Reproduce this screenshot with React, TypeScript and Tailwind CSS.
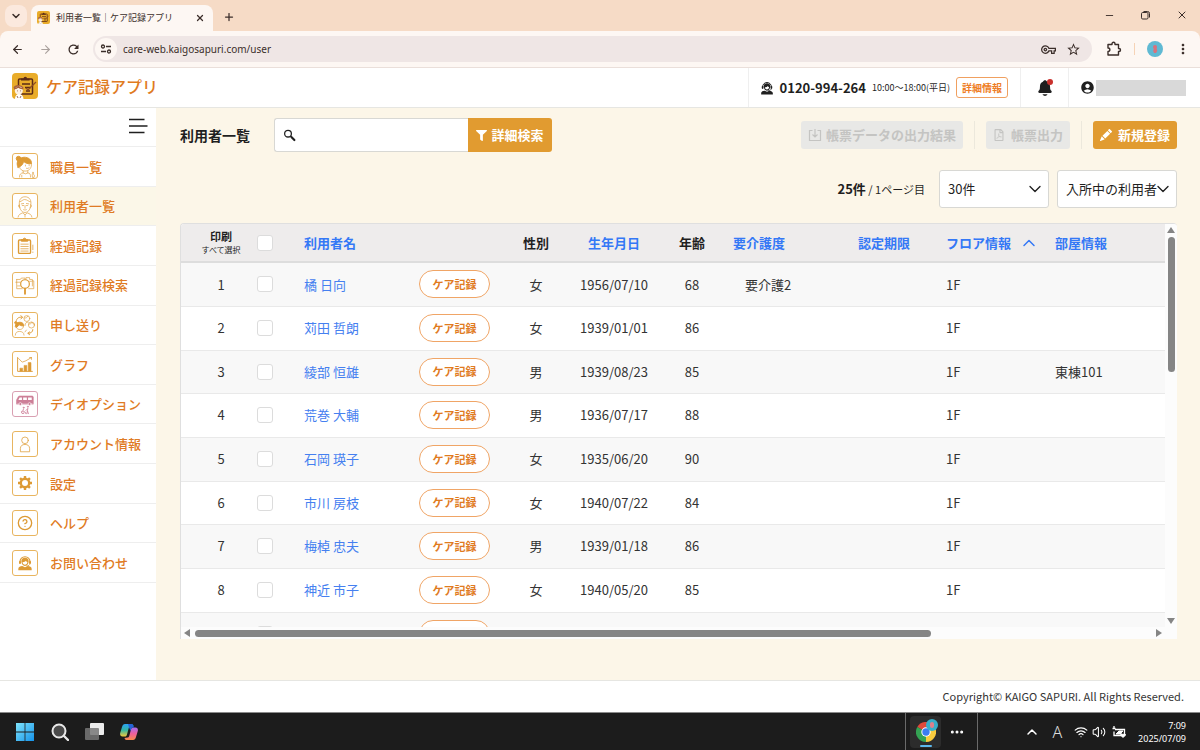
import { FaFilter, FaRegFilePdf } from "react-icons/fa"
import { BsPencilFill } from "react-icons/bs"
import { IoNotifications } from "react-icons/io5"
import { MdAccountCircle, MdOutlineVpnKey, MdStarOutline, MdMoreVert, MdRefresh } from "react-icons/md"
import {
  ArrowLeft,
  ArrowRight,
  ChevronDown,
  ChevronUp,
  CircleHelp,
  Minus,
  MoreHorizontal,
  Plus,
  Volume2,
  Wifi,
  X,
} from "lucide-react"
import type { ReactNode } from "react"

type User = {
  name: string
  sex: string
  birth: string
  age: number
  level?: string
  floor: string
  room?: string
}

const users: User[] = [
  { name: "橘 日向", sex: "女", birth: "1956/07/10", age: 68, level: "要介護2", floor: "1F" },
  { name: "苅田 哲朗", sex: "女", birth: "1939/01/01", age: 86, floor: "1F" },
  { name: "綾部 恒雄", sex: "男", birth: "1939/08/23", age: 85, floor: "1F", room: "東棟101" },
  { name: "荒巻 大輔", sex: "男", birth: "1936/07/17", age: 88, floor: "1F" },
  { name: "石岡 瑛子", sex: "女", birth: "1935/06/20", age: 90, floor: "1F" },
  { name: "市川 房枝", sex: "女", birth: "1940/07/22", age: 84, floor: "1F" },
  { name: "梅棹 忠夫", sex: "男", birth: "1939/01/18", age: 86, floor: "1F" },
  { name: "神近 市子", sex: "女", birth: "1940/05/20", age: 85, floor: "1F" },
  { name: "小林 一", sex: "女", birth: "1938/03/12", age: 87, level: "要介護3", floor: "1F" },
]

function Operator({ className }: { className?: string }) {
  return (
    <svg viewBox="0 0 24 24" className={className} fill="currentColor" aria-hidden="true">
      <path d="M4.500 10a7.500 7.500 0 0 1 15 0" fill="none" stroke="currentColor" strokeWidth="1.600" />
      <path d="M12 4a5.500 5.500 0 0 0-5.500 5.500c0 4 2.300 7 5.500 7s5.500-3 5.500-7A5.500 5.500 0 0 0 12 4zm-3.700 6.800c2.500 0 4.200-.8 5.200-2.200.5 1.200 1 1.800 2.100 2.200-.2 2.300-1.700 3.700-3.600 3.700s-3.500-1.400-3.700-3.700z" />
      <rect x="3" y="8.500" width="3" height="5" rx="1.400" />
      <rect x="18" y="8.500" width="3" height="5" rx="1.400" />
      <path d="M19.300 13c0 2-1.800 3.500-5.300 3.500" fill="none" stroke="currentColor" strokeWidth="1.200" />
      <path d="M2 23v-2.500c0-2.500 3-3.700 6-4l4 2 4-2c3 .3 6 1.500 6 4V23z" />
    </svg>
  )
}

function Gear({ className }: { className?: string }) {
  return (
    <svg viewBox="0 0 16 16" className={className} fill="none" stroke="currentColor" aria-hidden="true">
      <circle cx="8" cy="8" r="4.200" strokeWidth="2.400" />
      <path
        d="M8 1v2.500M8 12.500V15M1 8h2.500M12.500 8H15M3.050 3.050l1.800 1.800M11.150 11.150l1.800 1.800M3.050 12.950l1.800-1.800M11.150 4.850l1.800-1.800"
        strokeWidth="2.400"
      />
    </svg>
  )
}

function AppLogo({ className }: { className?: string }) {
  return (
    <svg viewBox="0 0 26 26" className={className} aria-hidden="true">
      <rect width="26" height="26" rx="4" fill="#e9ac2a" />
      <rect x="6.500" y="6" width="14" height="15" rx="1" fill="none" stroke="#5b2a16" strokeWidth="1.500" />
      <path d="M9 7.500V5.500h2.500a1.800 1.800 0 0 1 3.600 0h2.500v2z" fill="#5b2a16" />
      <path d="M10 11h8M13 14.500h6M14 18h4" stroke="#5b2a16" strokeWidth="1.300" />
      <path d="m14 15 2 2 8-8" stroke="#8c4a24" strokeWidth="1.200" fill="none" />
      <path d="M1.500 14.500c1-3.500 8-3.500 10 0l-1.500 2H3z" fill="#a9623b" />
      <circle cx="6.800" cy="17.500" r="4" fill="#fdf1e4" />
      <path d="M3 26c0-3 1.500-5 4-5s4.500 2 4.500 5z" fill="#fff" />
      <path d="M2 15.800c2.500-.2 3.500-1 4.300-2 1 1.300 2.500 1.800 5 2" stroke="#a9623b" strokeWidth="1.400" fill="none" />
      <path d="M5.500 17.500v.8M8.500 17.500v.8M5 23l1 2M9 23l-1 2" stroke="#7b4b38" strokeWidth=".8" />
    </svg>
  )
}

function Art({ children }: { children: ReactNode }) {
  return (
    <svg
      viewBox="0 0 26 26"
      className="size-full"
      fill="none"
      stroke="currentColor"
      strokeWidth="1"
      strokeLinecap="round"
      strokeLinejoin="round"
      aria-hidden="true"
    >
      {children}
    </svg>
  )
}

const menu = [
  {
    label: "職員一覧",
    icon: (
      <Art>
        <circle cx="6" cy="5" r="2.500" fill="currentColor" />
        <path d="M5.500 14.500C2.500 9 6 4 12 3.500c5 0 8.500 3 8 7-4 .3-6.500-.5-8.500-2.500-.5 3-2.500 5.500-6 6.500z" fill="currentColor" />
        <g strokeWidth=".7">
          <path d="M7 14c.5 2.500 3 5 7 4.500 4-.5 6.500-4 6-8" />
          <path d="M13.500 12v1M17.500 11.500v1M14.500 15.500c1.200.5 2 .2 3-.8M11 18.500v2M16 18.500v2M7 25c0-3 1.500-4.500 4-4.500l2.500 1 2.500-1c2.500 0 3 1.500 3 4.500M9.500 25v-2" />
          <path d="M21 25c-.5-2 0-3 .5-5.500.8 0 .8 1 .7 2.500 1 .5 1.300 1.500.8 3z" />
        </g>
      </Art>
    ),
  },
  {
    label: "利用者一覧",
    active: true,
    icon: (
      <Art>
        <g strokeWidth=".7">
          <path d="M7 13C6 7 8 3 13 3s7.500 4 6 10c-.5 4.500-3 7-6 7s-5.500-2.500-6-7z" />
          <path d="M7.500 8.500c2-.5 3-2.500 5-2.500 3 0 4 2 6.200 2.500M6.800 11.500c-1.500 0-1 3.500.7 3.500M19.200 11.500c1.500 0 1 3.500-.7 3.500" />
          <path d="M9 10.700l2.500-.4M14.500 10.300l2.500.4M10 12.500h1.500M14.500 12.500H16M13 12.500v3M11.500 17c1 .5 2 .5 3 0" />
          <path d="M5.500 25c.5-3 2.500-3.500 5-4.500l2.500 2 2.500-2c2.500 1 4.500 1.500 5 4.500M13 22.500V25" />
        </g>
      </Art>
    ),
  },
  {
    label: "経過記録",
    icon: (
      <Art>
        <rect x="6" y="6.500" width="13" height="14.500" rx="1" strokeWidth="1.500" />
        <path d="M9 7.500V6h2a1.500 1.500 0 0 1 3 0h2v1.500z" fill="currentColor" />
        <path d="M8.500 11h8M8.500 13.500h8M8.500 16h8M8.500 18.500h8M21.500 12v5M21.500 19.500v.5" strokeWidth=".8" />
      </Art>
    ),
  },
  {
    label: "経過記録検索",
    icon: (
      <Art>
        <path d="M4 7h4l1-1.500h4V7M14 7V5h4v2h3v7M4 7v10h6M3 10h5M21 8.500h1.500V17H17M5 14h3M18 9h2" strokeWidth=".7" />
        <circle cx="13" cy="12" r="4.700" strokeWidth="1.300" fill="#fff" />
        <path d="M13 17v5.500" strokeWidth="2" />
      </Art>
    ),
  },
  {
    label: "申し送り",
    icon: (
      <Art>
        <path d="M3.500 9c0-3 3-5 6-4.500M8.500 3l2 1.500-2 2M21.500 18c0 2.500-2 4-5 4M18 20.500L16 22l2 1.500" />
        <path d="M2.500 14.500c0-3 2-4.500 5-4.500s4.500 2 4 4c-2.500 0-4-.5-5-1.500-.5 1.500-1.500 2.500-3 3z" fill="currentColor" />
        <circle cx="3" cy="10.500" r="1.200" fill="currentColor" />
        <g strokeWidth=".7">
          <path d="M3.500 15.500c1.500 4 8 3 8-1.500M2.500 24c0-3 2-4 4.500-4s5 1 5 4M13 20.500l1.500-2" />
          <circle cx="15" cy="6" r="3.200" />
          <path d="M12.500 5.500c2 0 3-.7 3.500-2" />
          <circle cx="20" cy="13" r="3.300" />
          <path d="M17 12c2 0 3-.5 3.500-2 .7 1.500 1.500 2 2.500 2M13 13.500c0-3 2-4 3.500-3.500" />
        </g>
      </Art>
    ),
  },
  {
    label: "グラフ",
    icon: (
      <Art>
        <path d="M5 6v15h16" />
        <path d="M7.500 20.500v-3h3v3zM12 20.500v-6h3v6zM16.500 20.500v-9h3v9z" fill="currentColor" strokeWidth=".6" />
        <path d="M6 7l4 4 4-1.500L20 6M18 6h2v2" strokeWidth=".8" />
      </Art>
    ),
  },
  {
    label: "デイオプション",
    pink: true,
    icon: (
      <Art>
        <path d="M3.800 12.800v-4l2-3.800c.3-.5.700-.7 1.300-.7h13.400c1 0 1.500.5 1.500 1.500v7z" fill="currentColor" strokeWidth=".6" />
        <path d="M5.800 8.800l1.400-2.800h2.500v2.800zM11 6h4v2.800h-4zM16.300 6h4v2.800h-4z" fill="#fff" stroke="none" />
        <circle cx="8" cy="13" r="1.600" fill="currentColor" stroke="#fff" strokeWidth=".6" />
        <circle cx="18" cy="13" r="1.600" fill="currentColor" stroke="#fff" strokeWidth=".6" />
        <g strokeWidth=".9">
          <circle cx="11.500" cy="17" r=".5" />
          <circle cx="16" cy="16" r=".5" />
          <path d="M11.300 18.500l-.8 3h2.500l1 2M9.700 20.500a1.700 1.700 0 1 0 2.300 2.500M16 17.800l-.3 2.700 1 3M15.500 18.500l-1.500 1.500M15.500 21l-.5 2.500" />
        </g>
      </Art>
    ),
  },
  {
    label: "アカウント情報",
    icon: (
      <Art>
        <circle cx="13" cy="9" r="3.600" strokeWidth=".8" />
        <path d="M8 21v-3c0-3 2-4.500 5-4.500s5 1.500 5 4.500v3z" strokeWidth=".8" />
      </Art>
    ),
  },
  { label: "設定", icon: <Gear className="size-4" /> },
  { label: "ヘルプ", icon: <CircleHelp className="size-4" strokeWidth={2} /> },
  { label: "お問い合わせ", icon: <Operator className="size-4" /> },
]

function BrowserBar() {
  return (
    <div className="shrink-0 bg-[#f6dbc6] text-[#3b2e2a]">
      <div className="flex h-[31px] items-end">
        <button aria-label="タブを検索" className="mb-1 ml-[5px] grid size-[22px] place-items-center rounded-lg bg-[#fbe9de]">
          <ChevronDown className="size-3" strokeWidth={3} />
        </button>
        <div className="ml-1 flex h-[26px] w-[182px] items-center rounded-t-lg bg-[#fdf7f3] px-1.5 pb-px">
          <AppLogo className="size-[13px]" />
          <span className="ml-1.5 flex-1 text-[9px] whitespace-nowrap">利用者一覧｜ケア記録アプリ</span>
          <button aria-label="タブを閉じる" className="mr-0.5">
            <X className="size-2.5" strokeWidth={3} />
          </button>
        </div>
        <button aria-label="新しいタブ" className="mb-2 ml-2.5">
          <Plus className="size-3" strokeWidth={2.500} />
        </button>
        <div className="mb-2.5 ml-auto flex gap-[25px] pr-3">
          <button aria-label="最小化"><Minus className="size-[11px]" strokeWidth={2} /></button>
          <button aria-label="元に戻す">
            <svg viewBox="0 0 11 11" className="size-[11px]" fill="none" stroke="currentColor">
              <rect x="1.500" y="2.500" width="6.500" height="6.500" rx="1.200" />
              <path d="M3.500 1.500h4a2 2 0 0 1 2 2v4" />
            </svg>
          </button>
          <button aria-label="閉じる"><X className="size-3" strokeWidth={2} /></button>
        </div>
      </div>
      <div className="flex h-[37px] items-center rounded-tl-lg rounded-tr-lg border-b border-[#eadfda] bg-[#fdf7f3] pr-[13px] pl-[11px]">
        <button aria-label="戻る"><ArrowLeft className="size-[13px]" strokeWidth={2.200} /></button>
        <button aria-label="進む" className="ml-[15px] text-[#aaa19d]"><ArrowRight className="size-[13px]" strokeWidth={2} /></button>
        <button aria-label="再読み込み" className="ml-[14px]"><MdRefresh className="size-[15px]" /></button>
        <div className="ml-3 flex h-[26px] flex-1 items-center rounded-full bg-[#efe6e5] pr-[11px] pl-0.5">
          <span className="grid size-[22px] place-items-center rounded-full bg-[#fdf7f3]">
            <svg viewBox="0 0 12 12" className="size-3" fill="none" stroke="currentColor" strokeWidth="1.300">
              <circle cx="3" cy="3.500" r="1.500" />
              <path d="M6 3.500h5M1 8.500h5" />
              <circle cx="9" cy="8.500" r="1.500" />
            </svg>
          </span>
          <input
            aria-label="アドレス"
            defaultValue="care-web.kaigosapuri.com/user"
            className="ml-1.5 min-w-0 flex-1 bg-transparent font-['Noto_Sans',sans-serif] text-[10px] outline-none"
          />
          <MdOutlineVpnKey className="size-[15px]" />
          <MdStarOutline className="ml-2.5 size-[15px]" />
        </div>
        <svg viewBox="0 0 16 16" className="ml-3.5 size-4" fill="none" stroke="currentColor" strokeWidth="1.400" strokeLinejoin="round">
          <path d="M2 3.500h4v-.8a1.500 1.500 0 0 1 3 0v.8h3.500v4h.5a1.500 1.500 0 0 1 0 3h-.5V14H2v-3.500c2.500 0 2.500-3.500 0-3.500z" />
        </svg>
        <span className="ml-3 h-3 w-px bg-[#f6d3b6]" />
        <span className="ml-3 grid size-4 place-items-center rounded-full bg-[#5fb9d3]">
          <svg viewBox="0 0 8 10" className="h-2.5 w-2" fill="#d9717c">
            <circle cx="4" cy="3" r="2" />
            <path d="M3 4h2.500l.8 3L5 9H3l-.8-2z" />
          </svg>
        </span>
        <MdMoreVert className="-mr-1 ml-3 size-4" />
      </div>
    </div>
  )
}

function AppHeader() {
  return (
    <header className="flex h-10 shrink-0 items-stretch border-b border-[#e6e6e2] bg-white">
      <a href="#" className="flex items-center gap-2 pb-1 pl-3 text-[16px] font-medium text-[#e07b1f]">
        <AppLogo className="size-[26px]" />
        ケア記録アプリ
      </a>
      <div className="ml-auto flex items-center border-l border-[#efefef] pr-3 pl-[11px]">
        <Operator className="size-3.5" />
        <span className="ml-1.5 text-[13px] font-bold">0120-994-264</span>
        <span className="ml-1.5 text-[9px]">10:00～18:00(平日)</span>
        <button className="ml-1.5 h-[21px] rounded-[3px] border border-[#f0a060] px-[5px] text-[10px] leading-none font-bold text-[#ee7d26]">
          詳細情報
        </button>
      </div>
      <button aria-label="通知" className="relative grid w-12 place-items-center border-l border-[#efefef]">
        <IoNotifications className="size-[18px]" />
        <span className="absolute top-[11px] left-[26px] size-1.5 rounded-full bg-[#c8302c]" />
      </button>
      <div className="flex items-center border-l border-[#efefef] pr-3.5 pl-[11px]">
        <MdAccountCircle className="size-[15px]" />
        <span className="ml-px h-4 w-[90px] bg-[#d9d9d9]" />
      </div>
    </header>
  )
}

function Sidebar() {
  return (
    <aside className="w-[156px] shrink-0 bg-white">
      <div className="flex h-[38px] items-start justify-end pt-2 pr-2">
        <button aria-label="メニュー">
          <svg viewBox="0 0 20 20" className="size-5" stroke="currentColor" strokeWidth="1.300">
            <path d="M1 3.500h15.500M1 10h18.500M1 16.500h15.500" />
          </svg>
        </button>
      </div>
      <nav className="grid h-[437px] auto-rows-fr border-t border-[#eeeeee]">
        {menu.map((item) => (
          <a
            key={item.label}
            href="#"
            className={`flex items-center gap-3 border-b border-[#eeeeee] pl-3 text-[13px] font-medium text-[#df7b24] ${item.active ? "bg-[#fbf7e8]" : ""}`}
          >
            <span
              className={`grid size-[26px] place-items-center rounded-[3px] border bg-white ${item.pink ? "border-[#d9a0b2] text-[#cd7f98]" : "border-[#e8b560] text-[#dd9a34]"}`}
            >
              {item.icon}
            </span>
            {item.label}
          </a>
        ))}
      </nav>
    </aside>
  )
}

function Toolbar() {
  return (
    <>
      <div className="flex h-[34px] items-center">
        <h1 className="text-[14px] font-bold">利用者一覧</h1>
        <div className="ml-6 flex h-full">
          <label className="flex w-[194px] items-center rounded-l-[3px] border border-r-0 border-[#d8d8d4] bg-white pl-2">
            <svg viewBox="0 0 14 14" className="size-3.5" fill="none" stroke="currentColor">
              <circle cx="5.500" cy="5.500" r="3.700" strokeWidth="1.400" />
              <path d="M8.500 8.500l1 1" strokeWidth="1.400" />
              <path d="M9.500 9.500l3 3" strokeWidth="2.400" strokeLinecap="round" />
            </svg>
            <input type="text" aria-label="利用者を検索" className="ml-1 w-full min-w-0 outline-none" />
          </label>
          <button className="flex w-[84px] items-center justify-center gap-1 rounded-r-[3px] bg-[#e19b30] text-[13px] font-bold text-white">
            <FaFilter className="size-[11px]" />
            詳細検索
          </button>
        </div>
        <div className="ml-auto flex h-7 items-center text-[13px] font-bold">
          <button disabled className="flex h-full items-center gap-1 rounded-[3px] bg-[#e8e8e6] px-[7px] text-[#c4c4c2]">
            <svg viewBox="0 0 14 14" className="size-3.5" fill="none" stroke="currentColor" strokeWidth="1.200">
              <path d="M4.500 2.500h-3v10h11v-10h-3M7 1v8M4.500 6.500L7 9l2.500-2.500" />
            </svg>
            帳票データの出力結果
          </button>
          <span className="mx-[11px] h-full w-px bg-[#ece8dc]" />
          <button disabled className="flex h-full items-center gap-1.5 rounded-[3px] bg-[#e8e8e6] px-[7px] text-[#c4c4c2]">
            <FaRegFilePdf className="size-3" />
            帳票出力
          </button>
          <span className="mx-[11px] h-full w-px bg-[#ece8dc]" />
          <button className="flex h-full items-center gap-1.5 rounded-[3px] bg-[#e19b30] px-[7px] text-white">
            <BsPencilFill className="size-3" />
            新規登録
          </button>
        </div>
      </div>
      <div className="mt-[18px] flex h-[38px] items-center justify-end">
        <p className="mr-3.5 text-[11px]">
          <b className="text-[13px]">25件</b> / 1ページ目
        </p>
        <div className="relative mr-2 h-full w-[110px]">
          <select aria-label="表示件数" className="size-full appearance-none rounded-[3px] border border-[#d8d8d4] bg-white pl-2 text-[13px]">
            <option>30件</option>
          </select>
          <ChevronDown className="pointer-events-none absolute inset-y-0 right-1 my-auto size-5" strokeWidth={1.600} />
        </div>
        <div className="relative h-full w-[120px]">
          <select aria-label="利用者の状態" className="size-full appearance-none rounded-[3px] border border-[#d8d8d4] bg-white pl-2 text-[13px]">
            <option>入所中の利用者</option>
          </select>
          <ChevronDown className="pointer-events-none absolute inset-y-0 right-1 my-auto size-5" strokeWidth={1.600} />
        </div>
      </div>
    </>
  )
}

const checkbox = "block mx-auto size-4 appearance-none rounded-[3px] border border-[#dcdcdc] bg-white checked:bg-[#3478f6]"

function UserTable() {
  return (
    <div className="mt-[15px] flex min-h-0 flex-1 flex-col overflow-hidden rounded-t-[4px] border-t border-l border-[#dfdfdf] bg-white">
      <div className="flex min-h-0 flex-1">
        <div className="min-w-0 flex-1 overflow-hidden">
          <table className="w-full table-fixed text-[13px] text-[#333]">
            <colgroup>
              <col className="w-[70px]" />
              <col className="w-7" />
              <col className="w-[130px]" />
              <col className="w-[91px]" />
              <col className="w-[72px]" />
              <col className="w-[84px]" />
              <col className="w-[72px]" />
              <col className="w-20" />
              <col className="w-[129px]" />
              <col className="w-[108px]" />
              <col />
            </colgroup>
            <thead>
              <tr className="h-[38px] border-b-2 border-[#dddddd] bg-[#eeecec] text-[#1f1f1f]">
                <th className="pl-2.5 text-[11px] leading-[14px]">
                  印刷
                  <span className="block text-[8px] font-normal whitespace-nowrap">すべて選択</span>
                </th>
                <th><input type="checkbox" aria-label="すべて選択" className={checkbox} /></th>
                <th className="pl-[25px] text-left text-[#3478f6]">利用者名</th>
                <th />
                <th>性別</th>
                <th className="text-[#3478f6]">生年月日</th>
                <th>年齢</th>
                <th className="pl-[5px] text-left text-[#3478f6]">要介護度</th>
                <th className="pl-[50px] text-left text-[#3478f6]">認定期限</th>
                <th className="pl-[9px] text-left text-[#3478f6]">
                  <span className="flex items-center gap-2 whitespace-nowrap">
                    フロア情報
                    <ChevronUp className="size-5" strokeWidth={1.800} />
                  </span>
                </th>
                <th className="pl-2.5 text-left text-[#3478f6]">部屋情報</th>
              </tr>
            </thead>
            <tbody>
              {users.map((user, index) => (
                <tr key={user.name} className="h-11 border-b border-[#e9e9e9] text-center odd:bg-[#f8f8f8] nth-[3n]:h-[43px]">
                  <td className="pl-2.5">{index + 1}</td>
                  <td><input type="checkbox" aria-label={user.name} className={checkbox} /></td>
                  <td className="pl-[25px] text-left">
                    <a href="#" className="text-[#4580f0]">{user.name}</a>
                  </td>
                  <td>
                    <button className="h-7 w-[71px] rounded-full border border-[#f0a566] bg-white text-[11px] font-bold text-[#e07b1f]">
                      ケア記録
                    </button>
                  </td>
                  <td>{user.sex}</td>
                  <td>{user.birth}</td>
                  <td>{user.age}</td>
                  <td>{user.level}</td>
                  <td />
                  <td className="pl-[9px] text-left">{user.floor}</td>
                  <td className="pl-2.5 text-left">{user.room}</td>
                </tr>
              ))}
            </tbody>
          </table>
        </div>
        <div className="flex w-3 shrink-0 flex-col items-center bg-[#fcfcfc] pt-[3px]">
          <svg viewBox="0 0 8 6" className="h-1.5 w-2" fill="#858585"><path d="M4 0l4 6H0z" /></svg>
          <div className="mt-1 h-[135px] w-[7px] rounded-full bg-[#858585]" />
          <svg viewBox="0 0 8 6" className="mt-auto mb-[3px] h-1.5 w-2" fill="#858585"><path d="M4 6l4-6H0z" /></svg>
        </div>
      </div>
      <div className="flex h-3 shrink-0 items-center bg-[#fcfcfc] pr-[15px] pl-[3px]">
        <svg viewBox="0 0 6 8" className="h-2 w-1.5" fill="#858585"><path d="M0 4l6-4v8z" /></svg>
        <div className="mx-[5px] flex-1">
          <div className="h-[7px] w-[77%] rounded-full bg-[#858585]" />
        </div>
        <svg viewBox="0 0 6 8" className="h-2 w-1.5" fill="#858585"><path d="M6 4L0 0v8z" /></svg>
      </div>
    </div>
  )
}

function Taskbar() {
  return (
    <div className="flex h-[38px] shrink-0 items-center border-t border-[#8a8a8a] bg-[#1c1c1c] pr-3.5 pl-4 font-['Noto_Sans',sans-serif] text-white">
      <button aria-label="スタート">
        <svg viewBox="0 0 18 18" className="size-[18px]">
          <defs>
            <linearGradient id="win" x1="0" y1="0" x2="1" y2="1">
              <stop offset="0" stopColor="#7fe3fb" />
              <stop offset="1" stopColor="#1593ea" />
            </linearGradient>
          </defs>
          <path d="M0 0h8.600v8.600H0zM9.400 0H18v8.600H9.400zM0 9.400h8.600V18H0zM9.400 9.400H18V18H9.400z" fill="url(#win)" />
        </svg>
      </button>
      <button aria-label="検索" className="ml-[17px]">
        <svg viewBox="0 0 18 18" className="size-[18px]" fill="#4a4a4a" stroke="#e8e8e8">
          <circle cx="8" cy="8" r="6.500" strokeWidth="2" />
          <path d="M13 13l4 4" strokeWidth="2.400" strokeLinecap="round" />
        </svg>
      </button>
      <button aria-label="タスクビュー" className="ml-4">
        <svg viewBox="0 0 19 18" className="h-[18px] w-[19px]">
          <rect x="5" y="0" width="14" height="12" rx="1" fill="#ececec" />
          <rect x="0" y="5" width="14" height="12" rx="1" fill="#777" fillOpacity=".85" />
        </svg>
      </button>
      <button aria-label="Copilot" className="ml-4">
        <svg viewBox="0 0 18 18" className="size-[18px]">
          <defs>
            <linearGradient id="cpa" x1="0" y1="0" x2="0" y2="1">
              <stop offset="0" stopColor="#2aa4f4" />
              <stop offset=".5" stopColor="#36b6a0" />
              <stop offset="1" stopColor="#f5c83a" />
            </linearGradient>
            <linearGradient id="cpb" x1="0" y1="0" x2="0" y2="1">
              <stop offset="0" stopColor="#a56ef0" />
              <stop offset=".5" stopColor="#ee5f9b" />
              <stop offset="1" stopColor="#f78a4a" />
            </linearGradient>
          </defs>
          <path d="M5 1h6.500c1.200 0 1.700 1 2 2l-3 .5c-1 0-1.500.7-1.800 1.800L7 11.500C6.600 13 6 13.500 5 13.500H2.500C.5 13.500-.2 12 .2 10L2 4c.5-2 1.500-3 3-3z" fill="url(#cpa)" />
          <path d="M13 17H6.500c-1.200 0-1.700-1-2-2l3-.5c1 0 1.500-.7 1.800-1.800L11 6.500C11.400 5 12 4.500 13 4.500h2.500c2 0 2.700 1.500 2.300 3.500L16 14c-.5 2-1.500 3-3 3z" fill="url(#cpb)" />
          <path d="M11.500 1c1.200 0 1.700 1 2 2l.5 1.500h-1c-1 0-1.600.5-2 2l-.5 1.500L9 4.500 8 1z" fill="#2563d8" />
        </svg>
      </button>
      <div className="ml-auto flex h-full items-center border-x border-[#6a6a6a] px-1">
        <button aria-label="Chrome" className="relative grid h-8 w-[31px] place-items-center rounded bg-[#2c2c2c]">
          <svg viewBox="0 0 20 20" className="size-5">
            <path d="M10 10L1.300 5A10 10 0 0 1 18.700 5z" fill="#e04a3a" />
            <path d="M10 10L18.700 5A10 10 0 0 1 10 20z" fill="#f8cb3e" />
            <path d="M10 10v10A10 10 0 0 1 1.300 5z" fill="#34a353" />
            <circle cx="10" cy="10" r="4.700" fill="#fff" />
            <circle cx="10" cy="10" r="3.700" fill="#3b7df0" />
          </svg>
          <span className="absolute top-[3px] right-[3px] grid size-3 place-items-center rounded-full bg-[#38aec8]">
            <span className="h-1.5 w-1 rounded-full bg-[#e0808a]" />
          </span>
          <span className="absolute bottom-px h-0.5 w-3 rounded-full bg-[#5cb8ee]" />
        </button>
        <button aria-label="その他のアプリ" className="mx-2"><MoreHorizontal className="size-4" strokeWidth={2.500} /></button>
      </div>
      <div className="ml-[46px] flex items-center">
        <ChevronUp className="size-4" strokeWidth={2.200} />
        <span className="ml-3 text-[16px] font-light text-[#dcdcdc]">A</span>
        <Wifi className="ml-3 size-3.5" strokeWidth={2} />
        <Volume2 className="ml-1 size-3.5" strokeWidth={1.800} />
        <svg viewBox="0 0 14 12" className="ml-1.5 h-3 w-3.5" fill="none" stroke="currentColor">
          <path d="M3 3.500h9.500v6H2v-4M2 0v3M0.500 2.500h3" strokeWidth="1.300" />
          <path d="M4 8l3-3h4L8 8z" fill="currentColor" />
          <path d="M11 11.500L8.500 9c0-1.500 2-1.500 2.500-.3.500-1.200 2.500-1.200 2.500.3z" fill="currentColor" />
        </svg>
        <p className="ml-3 text-right text-[9px] leading-[13px]">
          7:09
          <br />
          2025/07/09
        </p>
      </div>
    </div>
  )
}

export default function App() {
  return (
    <div className="flex h-screen flex-col overflow-hidden bg-white font-['Noto_Sans_CJK_JP',sans-serif] text-[#1f1f1f]">
      <BrowserBar />
      <AppHeader />
      <div className="flex min-h-0 flex-1">
        <Sidebar />
        <main className="flex min-w-0 flex-1 flex-col bg-[#fcf6e8] pt-2.5 pr-[23px] pb-[41px] pl-6">
          <Toolbar />
          <UserTable />
        </main>
      </div>
      <footer className="flex h-8 shrink-0 items-center justify-end border-t border-[#e6e6e2] bg-white pr-4 text-[11px] text-[#333]">
        Copyright© KAIGO SAPURI. All Rights Reserved.
      </footer>
      <Taskbar />
    </div>
  )
}
